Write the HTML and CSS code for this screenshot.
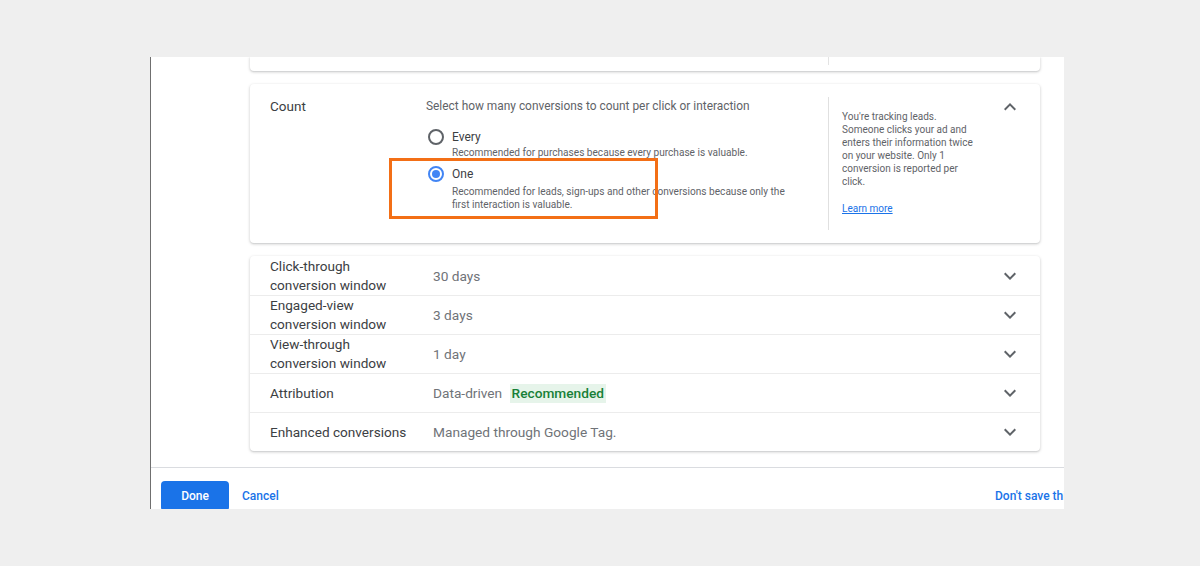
FILE: index.html
```html
<!DOCTYPE html>
<html lang="en">
<head>
    <meta charset="UTF-8">
    <title>Conversion action settings</title>
    <link rel="stylesheet" href="styles.css">
</head>
<body>
  <div class="frame">
      <div class="settings">
          <div class="card card-partial">
              <div class="partial-divider"></div>
          </div>

          <div class="card count-card">
              <p class="field-label">Count</p>
              <div class="count-main">
                  <p class="count-desc">Select how many conversions to count per click or interaction</p>
                  <div class="radio-option">
                      <span class="radio"></span>
                      <div>
                          <p class="radio-label">Every</p>
                          <p class="radio-sub">Recommended for purchases because every purchase is valuable.</p>
                      </div>
                  </div>
                  <div class="radio-option option-one">
                      <span class="radio checked"></span>
                      <div>
                          <p class="radio-label">One</p>
                          <p class="radio-sub">Recommended for leads, sign-ups and other conversions because only the first interaction is valuable.</p>
                      </div>
                  </div>
              </div>
              <div class="count-side">
                  <p>You're tracking leads.<br>Someone clicks your ad and<br>enters their information twice<br>on your website. Only 1<br>conversion is reported per<br>click.</p>
                  <a class="learn-more" href="#">Learn more</a>
              </div>
              <div class="expand expand-up">
                  <svg viewBox="0 0 24 24" width="24" height="24"><path d="M7.4 15.4 12 10.8l4.6 4.6L18 14l-6-6-6 6z"/></svg>
              </div>
              <div class="highlight"></div>
          </div>

          <div class="card rows">
              <div class="row">
                  <p class="row-label">Click-through<br>conversion window</p>
                  <p class="row-value">30 days</p>
                  <svg class="chevron" viewBox="0 0 24 24" width="24" height="24"><path d="M7.4 8.6 12 13.2l4.6-4.6L18 10l-6 6-6-6z"/></svg>
              </div>
              <div class="row">
                  <p class="row-label">Engaged-view<br>conversion window</p>
                  <p class="row-value">3 days</p>
                  <svg class="chevron" viewBox="0 0 24 24" width="24" height="24"><path d="M7.4 8.6 12 13.2l4.6-4.6L18 10l-6 6-6-6z"/></svg>
              </div>
              <div class="row">
                  <p class="row-label">View-through<br>conversion window</p>
                  <p class="row-value">1 day</p>
                  <svg class="chevron" viewBox="0 0 24 24" width="24" height="24"><path d="M7.4 8.6 12 13.2l4.6-4.6L18 10l-6 6-6-6z"/></svg>
              </div>
              <div class="row">
                  <p class="row-label">Attribution</p>
                  <p class="row-value">Data-driven <span class="chip">Recommended</span></p>
                  <svg class="chevron" viewBox="0 0 24 24" width="24" height="24"><path d="M7.4 8.6 12 13.2l4.6-4.6L18 10l-6 6-6-6z"/></svg>
              </div>
              <div class="row">
                  <p class="row-label">Enhanced conversions</p>
                  <p class="row-value">Managed through Google Tag.</p>
                  <svg class="chevron" viewBox="0 0 24 24" width="24" height="24"><path d="M7.4 8.6 12 13.2l4.6-4.6L18 10l-6 6-6-6z"/></svg>
              </div>
          </div>
      </div>

      <div class="footer">
          <button class="btn-done">Done</button>
          <a class="btn-link" href="#">Cancel</a>
          <a class="btn-link dont-save" href="#">Don't save this action</a>
      </div>
  </div>
</body>
</html>
```

FILE: styles.css
```css
/* General */

*
{
    box-sizing: border-box;
    margin: 0;
    padding: 0;
    font-family: Roboto, "Liberation Sans", Arial, sans-serif;
}
body
{
    background-color: #efefef;
    padding: 57px 0 0 150px;
}
p
{
    color: #3c4043;
}

/* Frame */

.frame
{
    width: 914px;
    height: 452px;
    background-color: #fff;
    border-left: 1px solid #6f6f6f;
    overflow: hidden;
    display: flex;
    flex-direction: column;
}
.settings
{
    padding-left: 99px;
    display: flex;
    flex-direction: column;
}
.card
{
    width: 790px;
    background-color: #fff;
    border-radius: 0 0 4px 4px;
    box-shadow: 0 1px 2px rgba(60, 64, 67, 0.22), 0 1px 3px 1px rgba(60, 64, 67, 0.08);
}
.card-partial
{
    height: 14px;
    padding-left: 578px;
}
.partial-divider
{
    width: 1px;
    height: 8px;
    background-color: #e3e3e3;
}

/* Count card */

.count-card
{
    position: relative;
    margin-top: 13px;
    height: 159px;
    display: flex;
    padding: 14px 0 13px 20px;
    border-radius: 4px;
}
.field-label
{
    width: 156px;
    font-size: 13.5px;
    line-height: 16px;
    color: #3c4043;
}
.count-main
{
    width: 402px;
}
.count-desc
{
    font-size: 11.9px;
    line-height: 16px;
    color: #5f6368;
}
.radio-option
{
    display: flex;
    gap: 8px;
    margin-top: 15px;
    padding-left: 2px;
}
.option-one
{
    margin-top: 7px;
}
.radio
{
    width: 16px;
    height: 16px;
    border: 2px solid #5f6368;
    border-radius: 50%;
    flex-shrink: 0;
    display: flex;
    align-items: center;
    justify-content: center;
}
.radio.checked
{
    border-color: #4285f4;
}
.radio.checked::after
{
    content: "";
    width: 8px;
    height: 8px;
    border-radius: 50%;
    background-color: #4285f4;
}
.radio-label
{
    font-size: 12px;
    line-height: 16px;
    color: #3c4043;
}
.radio-sub
{
    font-size: 10.1px;
    line-height: 13px;
    margin-top: 1px;
    color: #5f6368;
    max-width: 345px;
}
.option-one .radio-sub
{
    margin-top: 3px;
}
.count-side
{
    width: 160px;
    margin-top: -1px;
    border-left: 1px solid #e0e0e0;
    padding: 13px 0 0 13px;
}
.count-side p
{
    font-size: 10px;
    line-height: 13px;
    color: #5f6368;
}
.learn-more
{
    display: inline-block;
    margin-top: 14px;
    font-size: 10px;
    line-height: 13px;
    color: #1a73e8;
}
.expand
{
    flex: 1;
    display: flex;
    justify-content: flex-end;
    align-items: flex-start;
    padding-right: 18px;
    margin-top: -3px;
}
.expand svg,
.chevron
{
    fill: #5f6368;
    flex-shrink: 0;
}
.highlight
{
    position: absolute;
    left: 139px;
    top: 74px;
    width: 269px;
    height: 61px;
    border: 3px solid #f36f16;
    pointer-events: none;
}

/* Rows */

.rows
{
    margin-top: 13px;
    border-radius: 4px;
}
.row
{
    height: 39px;
    display: flex;
    align-items: center;
    padding: 0 18px 0 20px;
}
.row + .row
{
    border-top: 1px solid #ececec;
}
.row-label
{
    width: 163px;
    font-size: 13.6px;
    line-height: 19px;
    color: #3c4043;
}
.row-value
{
    flex: 1;
    font-size: 13.7px;
    color: #707378;
}
.chip
{
    display: inline-block;
    margin-left: 4px;
    padding: 2px 2px;
    background-color: #e6f4ea;
    color: #188038;
    font-weight: 500;
    line-height: 15px;
}

/* Footer */

.footer
{
    margin-top: 16px;
    border-top: 1px solid #dadce0;
    padding: 13px 0 0 10px;
    display: flex;
    align-items: flex-start;
}
.btn-done
{
    width: 68px;
    height: 30px;
    border: none;
    border-radius: 4px;
    background-color: #1a73e8;
    color: #fff;
    font-size: 12px;
    font-weight: 500;
}
.btn-link
{
    margin-left: 13px;
    line-height: 30px;
    font-size: 12px;
    font-weight: 500;
    color: #1a73e8;
    text-decoration: none;
}
.dont-save
{
    margin-left: auto;
    width: 69px;
    flex-shrink: 0;
    white-space: nowrap;
}
```
